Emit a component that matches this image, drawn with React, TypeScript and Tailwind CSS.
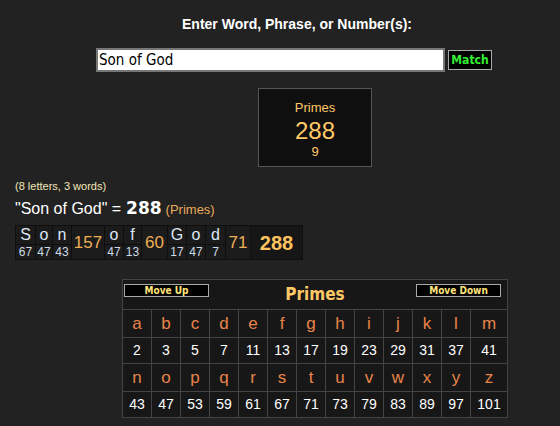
import type { ReactNode } from 'react';

const letters1 = ['a', 'b', 'c', 'd', 'e', 'f', 'g', 'h', 'i', 'j', 'k', 'l', 'm'];
const values1  = [2, 3, 5, 7, 11, 13, 17, 19, 23, 29, 31, 37, 41];
const letters2 = ['n', 'o', 'p', 'q', 'r', 's', 't', 'u', 'v', 'w', 'x', 'y', 'z'];
const values2  = [43, 47, 53, 59, 61, 67, 71, 73, 79, 83, 89, 97, 101];

const words = [
	{ letters: [['S', 67, 'w-[19px]'], ['o', 47, 'w-[16px]'], ['n', 43, 'w-[18px]']], sum: 157, sumWidth: 'w-[32px]' },
	{ letters: [['o', 47, 'w-[18px]'], ['f', 13, 'w-[17px]']], sum: 60, sumWidth: 'w-[25px]' },
	{ letters: [['G', 17, 'w-[18px]'], ['o', 47, 'w-[18px]'], ['d', 7, 'w-[19px]']], sum: 71, sumWidth: 'w-[24px]' },
] as const;

const TopButton = ({ children }: { children: ReactNode }) => (
	<button className="w-[85px] h-[13px] bg-black border border-[#aaa] text-[#ffe37a] text-[10px] font-bold leading-none [font-family:'DejaVu_Sans_Condensed',sans-serif] flex items-center justify-center">
		{children}
	</button>
);

const LetterRow = ({ letters }: { letters: string[] }) => (
	<>
		{letters.map((l, i) => (
			<div key={i} className="bg-[#171717] h-[27px] flex items-center justify-center text-[17px] text-[#e8844a]">{l}</div>
		))}
	</>
);

const ValueRow = ({ values }: { values: number[] }) => (
	<>
		{values.map((v, i) => (
			<div key={i} className="bg-[#171717] h-[25px] flex items-center justify-center text-[14px] text-white">{v}</div>
		))}
	</>
);

export default function App() {
	return (
		<div className="w-[560px] h-[426px] bg-[#222] overflow-hidden flex flex-col [font-family:'Liberation_Sans',Arial,sans-serif]">
			<p className="mt-[16px] ml-[182px] text-[14px] font-bold text-white leading-[16px]">Enter Word, Phrase, or Number(s):</p>

			<div className="mt-[16px] ml-[96px] flex items-center">
				<input
					type="text"
					readOnly
					value="Son of God"
					className="w-[349px] h-[24px] bg-white border-2 border-[#777] px-[1px] text-[15px] text-black [font-family:'DejaVu_Sans_Condensed',sans-serif] outline-none"
				/>
				<button className="ml-[3px] w-[44px] h-[20px] bg-black border border-[#aaa] text-[#33ee33] text-[12px] font-bold [font-family:'DejaVu_Sans_Condensed',sans-serif] leading-none">Match</button>
			</div>

			<div className="mt-[16px] ml-[258px] w-[114px] h-[79px] bg-[#0f0f0f] border border-[#555] flex flex-col items-center text-[#ffc966]">
				<span className="mt-[11px] text-[13px] leading-[15px]">Primes</span>
				<span className="mt-[3px] text-[24px] leading-[26px]">288</span>
				<span className="text-[13px] leading-[15px]">9</span>
			</div>

			<p className="mt-[13px] ml-[15px] text-[11px] leading-[13px] text-[#f3e6b8]">(8 letters, 3 words)</p>

			<p className="mt-[6px] ml-[15px] text-[16px] leading-[18px] text-white flex items-baseline">
				<span>"Son of God" =</span>
				<span className="ml-[5px] text-[17px] font-bold [font-family:'DejaVu_Sans',sans-serif]">288</span>
				<span className="ml-[4px] text-[13px] text-[#e9ac5c]">(Primes)</span>
			</p>

			<div className="mt-[6px] ml-[15px] self-start flex bg-[#0e0e0e] p-px gap-px">
				{words.map((w, wi) => (
					<div key={wi} className="flex gap-px">
						{w.letters.map(([l, v, width], li) => (
							<div key={li} className={`${width} flex flex-col gap-px`}>
								<div className="h-[18px] bg-[#1b1b1b] flex items-center justify-center text-[16px] text-[#dde8f5]">{l}</div>
								<div className="h-[14px] bg-[#1b1b1b] flex items-center justify-center text-[12px] text-[#cfdbe8]">{v}</div>
							</div>
						))}
						<div className={`${w.sumWidth} bg-[#1b1b1b] flex items-center justify-center text-[17px] text-[#eeb055]`}>{w.sum}</div>
					</div>
				))}
				<div className="w-[51px] bg-[#161616] flex items-center justify-center text-[20px] font-bold text-[#ffc35e]">288</div>
			</div>

			<div className="mt-[19px] ml-[122px] self-start border border-[#444] bg-[#444] grid grid-cols-[repeat(12,28px)_36px] gap-px">
				<div className="col-span-full h-[29px] bg-[#171717] grid grid-cols-[1fr_auto_1fr]">
					<div className="ml-[1px] mt-[4px] justify-self-start"><TopButton>Move Up</TopButton></div>
					<span className="self-center text-[17px] font-bold text-[#ffc966] [font-family:'DejaVu_Sans_Condensed',sans-serif] leading-none">Primes</span>
					<div className="mr-[6px] mt-[4px] justify-self-end"><TopButton>Move Down</TopButton></div>
				</div>
				<LetterRow letters={letters1} />
				<ValueRow values={values1} />
				<LetterRow letters={letters2} />
				<ValueRow values={values2} />
			</div>
		</div>
	);
}
